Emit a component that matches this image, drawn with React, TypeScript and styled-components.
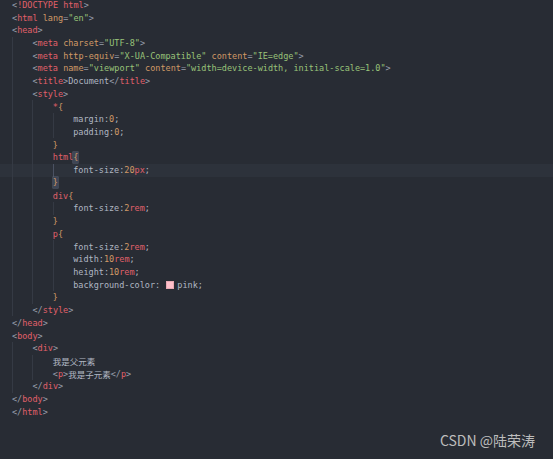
import React from "react";
import styled, { createGlobalStyle } from "styled-components";

const Global = createGlobalStyle`
  html, body { margin: 0; padding: 0; background: #282c34; }
  body { width: 553px; height: 459px; overflow: hidden; }
`;

type Kind = "p" | "t" | "a" | "s" | "n" | "u" | "b" | "x" | "hb";
type Tok = [Kind, string];
interface Line { indent: number; toks: Tok[]; active?: boolean; swatch?: boolean }

const C: Record<Kind, string> = {
  p: "#979eab",
  t: "#e0606a",
  a: "#d19a66",
  s: "#98c379",
  n: "#d19a66",
  u: "#e0606a",
  b: "#d19a66",
  x: "#b0b7c3",
  hb: "#d19a66",
};

const lines: Line[] = [
  { indent: 0, toks: [["p", "<"], ["t", "!DOCTYPE html"], ["p", ">"]] },
  { indent: 0, toks: [["p", "<"], ["t", "html"], ["p", " "], ["a", "lang"], ["p", "="], ["s", "\"en\""], ["p", ">"]] },
  { indent: 0, toks: [["p", "<"], ["t", "head"], ["p", ">"]] },
  { indent: 1, toks: [["p", "<"], ["t", "meta"], ["p", " "], ["a", "charset"], ["p", "="], ["s", "\"UTF-8\""], ["p", ">"]] },
  { indent: 1, toks: [["p", "<"], ["t", "meta"], ["p", " "], ["a", "http-equiv"], ["p", "="], ["s", "\"X-UA-Compatible\""], ["p", " "], ["a", "content"], ["p", "="], ["s", "\"IE=edge\""], ["p", ">"]] },
  { indent: 1, toks: [["p", "<"], ["t", "meta"], ["p", " "], ["a", "name"], ["p", "="], ["s", "\"viewport\""], ["p", " "], ["a", "content"], ["p", "="], ["s", "\"width=device-width, initial-scale=1.0\""], ["p", ">"]] },
  { indent: 1, toks: [["p", "<"], ["t", "title"], ["p", ">"], ["x", "Document"], ["p", "</"], ["t", "title"], ["p", ">"]] },
  { indent: 1, toks: [["p", "<"], ["t", "style"], ["p", ">"]] },
  { indent: 2, toks: [["t", "*"], ["b", "{"]] },
  { indent: 3, toks: [["x", "margin:"], ["n", "0"], ["x", ";"]] },
  { indent: 3, toks: [["x", "padding:"], ["n", "0"], ["x", ";"]] },
  { indent: 2, toks: [["b", "}"]] },
  { indent: 2, toks: [["t", "html"], ["hb", "{"]] },
  { indent: 3, active: true, toks: [["x", "font-size:"], ["n", "20"], ["u", "px"], ["x", ";"]] },
  { indent: 2, toks: [["hb", "}"]] },
  { indent: 2, toks: [["t", "div"], ["b", "{"]] },
  { indent: 3, toks: [["x", "font-size:"], ["n", "2"], ["u", "rem"], ["x", ";"]] },
  { indent: 2, toks: [["b", "}"]] },
  { indent: 2, toks: [["t", "p"], ["b", "{"]] },
  { indent: 3, toks: [["x", "font-size:"], ["n", "2"], ["u", "rem"], ["x", ";"]] },
  { indent: 3, toks: [["x", "width:"], ["n", "10"], ["u", "rem"], ["x", ";"]] },
  { indent: 3, toks: [["x", "height:"], ["n", "10"], ["u", "rem"], ["x", ";"]] },
  { indent: 3, swatch: true, toks: [["x", "background-color: "]] },
  { indent: 2, toks: [["b", "}"]] },
  { indent: 1, toks: [["p", "</"], ["t", "style"], ["p", ">"]] },
  { indent: 0, toks: [["p", "</"], ["t", "head"], ["p", ">"]] },
  { indent: 0, toks: [["p", "<"], ["t", "body"], ["p", ">"]] },
  { indent: 1, toks: [["p", "<"], ["t", "div"], ["p", ">"]] },
  { indent: 2, toks: [["x", "我是父元素"]] },
  { indent: 2, toks: [["p", "<"], ["t", "p"], ["p", ">"], ["x", "我是子元素"], ["p", "</"], ["t", "p"], ["p", ">"]] },
  { indent: 1, toks: [["p", "</"], ["t", "div"], ["p", ">"]] },
  { indent: 0, toks: [["p", "</"], ["t", "body"], ["p", ">"]] },
  { indent: 0, toks: [["p", "</"], ["t", "html"], ["p", ">"]] },
];

const Page = styled.div`
  position: relative;
  width: 553px;
  height: 459px;
  background: #282c34;
  overflow: hidden;
`;

const Editor = styled.div`
  display: flex;
  flex-direction: column;
  margin-top: -1.5px;
  font-family: "DejaVu Sans Mono", "Noto Sans CJK SC", monospace;
  font-size: 8.5px;
  color: #b0b7c3;
`;

const Row = styled.div<{ $active?: boolean }>`
  display: flex;
  align-items: center;
  height: 12.72px;
  padding-left: 12px;
  white-space: pre;
  background: ${(p) => (p.$active ? "#2d323b" : "transparent")};
`;

const Indent = styled.span<{ $active?: boolean }>`
  display: inline-block;
  align-self: stretch;
  width: 20.4px;
  flex: none;
  box-sizing: border-box;
  border-left: 1px solid ${(p) => (p.$active ? "#4b5263" : "#353a44")};
`;

const Token = styled.span<{ $kind: Kind }>`
  color: ${(p) => C[p.$kind]};
  ${(p) =>
    p.$kind === "hb"
      ? `background: #3e4656; box-shadow: 0 0 0 0.5px #5a6375; line-height: 11px;`
      : ""}
`;

const Swatch = styled.span`
  display: inline-block;
  width: 6px;
  height: 6px;
  margin: 0 3px 0 1px;
  background: #ffc0cb;
  border: 0.5px solid #e8a9b4;
`;

const Watermark = styled.div`
  position: absolute;
  right: 18px;
  bottom: 9px;
  font-family: "Noto Sans CJK SC", "Liberation Sans", sans-serif;
  font-size: 14px;
  color: #bdbdbd;
`;

export default function App() {
  return (
    <Page>
      <Global />
      <Editor>
        {lines.map((l, i) => (
          <Row key={i} $active={l.active}>
            {Array.from({ length: l.indent }).map((_, k) => (
              <Indent key={k} $active={l.active && k === l.indent - 1} />
            ))}
            {l.toks.map(([k, t], j) => (
              <Token key={j} $kind={k}>
                {t}
              </Token>
            ))}
            {l.swatch && (
              <>
                <Swatch />
                <Token $kind="x">pink;</Token>
              </>
            )}
          </Row>
        ))}
      </Editor>
      <Watermark>CSDN @陆荣涛</Watermark>
    </Page>
  );
}
